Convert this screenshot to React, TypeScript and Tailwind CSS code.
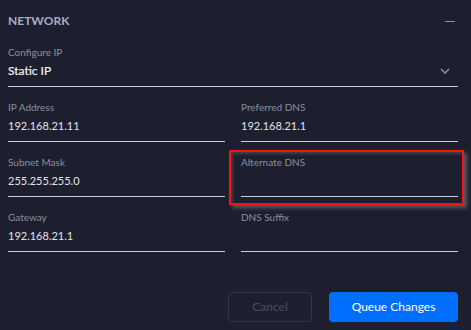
type FieldProps = {
  label: string;
  value?: string;
  highlight?: boolean;
};

function Field({ label, value, highlight }: FieldProps) {
  return (
    <div className="relative flex flex-col border-b border-[#c9ccd4] pb-[8px]">
      <div className="text-[10px] leading-[12px] text-[#8c909f]">{label}</div>
      <div className="mt-[6px] h-[14px] text-[11px] leading-[14px] text-[#e1e4ea]">
        {value}
      </div>
      {highlight && (
        <div className="pointer-events-none absolute -left-[12px] -top-[6px] -right-[6px] -bottom-[9px] border-2 border-[#ff1010] shadow-[3px_3px_4px_rgba(130,130,140,0.6),inset_2px_2px_3px_rgba(130,130,140,0.35)]" />
      )}
    </div>
  );
}

export default function App() {
  return (
    <div
      className="h-[330px] w-[471px] bg-[#1d1f2e] pl-[8px] pr-[13px] pt-[13px]"
      style={{ fontFamily: 'Lato, "Noto Sans", sans-serif' }}
    >
      <div className="flex h-[16px] items-center justify-between">
        <div className="text-[12px] font-bold leading-[16px] text-[#a5aec3]">NETWORK</div>
        <div className="mr-[3px] h-px w-[10px] bg-[#8c909f]" />
      </div>

      <div className="mt-[17px] flex flex-col border-b border-[#c9ccd4] pb-[8px]">
        <div className="text-[10px] leading-[12px] text-[#8c909f]">Configure IP</div>
        <div className="mt-[6px] flex h-[14px] items-center justify-between">
          <span className="text-[12px] leading-[14px] text-[#f2f4f7] [-webkit-text-stroke:0.2px_#f2f4f7]">Static IP</span>
          <svg
            width="10"
            height="6"
            viewBox="0 0 10 6"
            className="mr-[8px]"
            fill="none"
            stroke="#8c909f"
            strokeWidth="1.5"
          >
            <path d="M1 1l4 4 4-4" />
          </svg>
        </div>
      </div>

      <div className="mt-[14px] grid grid-cols-2 gap-x-[16px] gap-y-[14px]">
        <Field label="IP Address" value="192.168.21.11" />
        <Field label="Preferred DNS" value="192.168.21.1" />
        <Field label="Subnet Mask" value="255.255.255.0" />
        <Field label="Alternate DNS" highlight />
        <Field label="Gateway" value="192.168.21.1" />
        <Field label="DNS Suffix" />
      </div>

      <div className="mt-[40px] flex justify-end gap-[17px]">
        <button className="h-[30px] w-[84px] rounded-[4px] border border-[#333646] text-[12px] text-[#4b4f60]">
          Cancel
        </button>
        <button className="h-[30px] w-[129px] rounded-[4px] bg-[#006fff] text-[12px] text-white">
          Queue Changes
        </button>
      </div>
    </div>
  );
}
